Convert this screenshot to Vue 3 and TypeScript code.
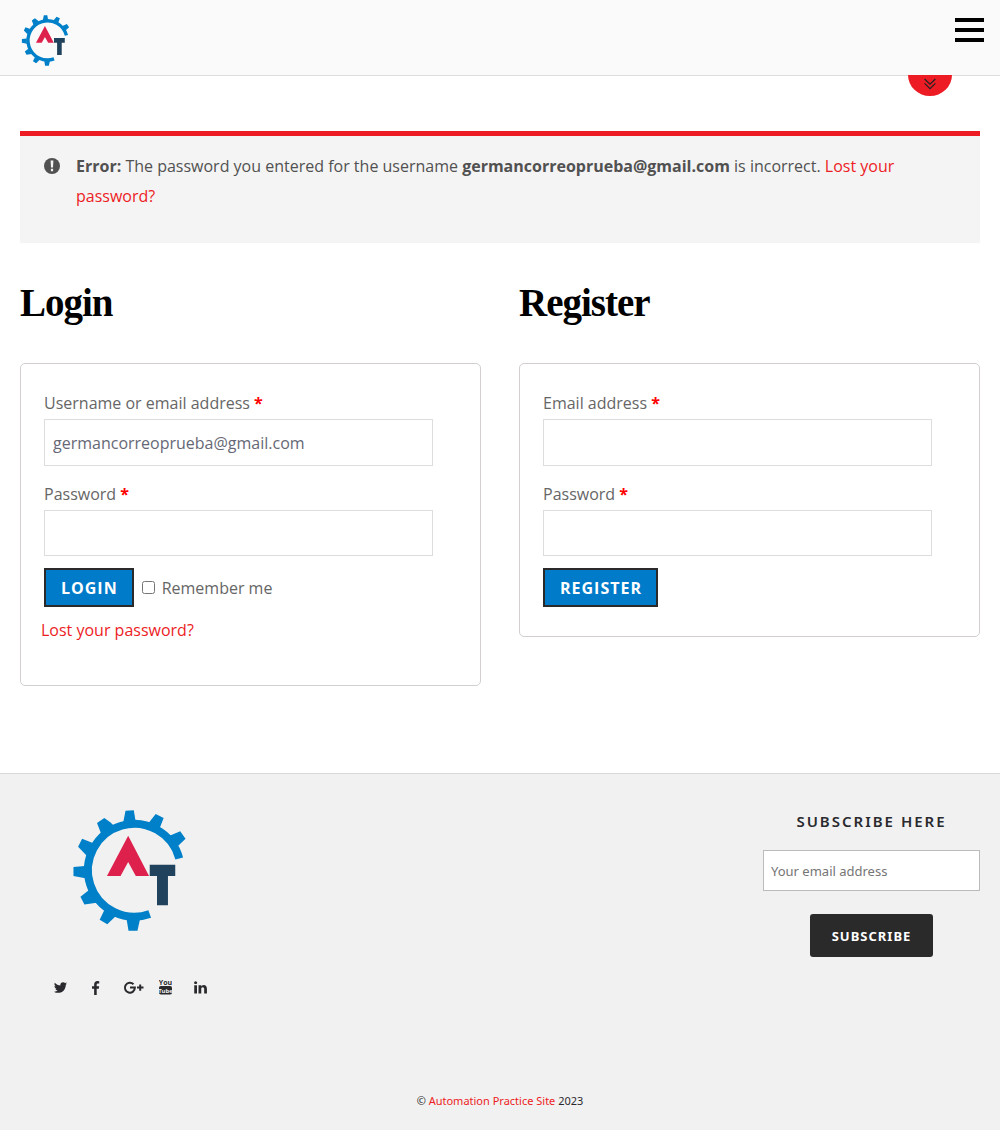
<script setup lang="ts">
import { ref } from 'vue'

const username = ref('germancorreoprueba@gmail.com')
const loginPassword = ref('')
const remember = ref(false)
const registerEmail = ref('')
const registerPassword = ref('')
const subscriber = ref('')
</script>

<template>
  <div class="page">
    <svg class="symbols" aria-hidden="true">
      <symbol id="brand" viewBox="39 44 340 365">
        <path d="M359 190A140 140 0 1 0 270 358" fill="none" stroke="#0080c8" stroke-width="24" />
        <path
          fill="#0080c8"
          d="M197 46 222 45 228 82H190ZM288 56 312 68 300 99 266 84ZM362 108 378 131 356 152 350 176 322 128 330 122ZM111 83 133 68 152 82 166 96 126 126 122 112ZM66 131 54 155 80 182 100 144ZM40 216V243L76 250 74 213ZM61 306 73 329 110 324 86 286ZM134 344 119 375 142 389 168 364ZM200 372 206 408H233L241 372Z"
        />
        <path fill="#dd214c" d="M205 122 268 243H228L205 201 182 243H141Z" />
        <path fill="#21425c" d="M270 209H347V243H325V331H292V243H270Z" />
      </symbol>
    </svg>

    <header class="topbar">
      <a href="#" class="brand" aria-label="Home"><svg class="brand-small"><use href="#brand" /></svg></a>
      <button type="button" class="menu" aria-label="Menu"><span></span><span></span><span></span></button>
      <button type="button" class="drop" aria-label="Expand">
        <svg width="12" height="12" viewBox="0 0 12 12" fill="none" stroke="#222" stroke-width="1.2">
          <path d="M.6 1 6 6.2 11.4 1M.6 5.4 6 10.6 11.4 5.4" />
        </svg>
      </button>
    </header>

    <main class="content">
      <div class="notice" role="alert">
        <svg class="notice-icon" width="16" height="16" viewBox="0 0 16 16">
          <circle cx="8" cy="8" r="8" fill="#515151" />
          <path d="M6.600 2.600H9.400L9 9.400H7ZM6.900 10.800H9.100V13.200H6.900Z" fill="#f4f4f4" />
        </svg>
        <p>
          <strong>Error:</strong> The password you entered for the username
          <strong>germancorreoprueba@gmail.com</strong> is incorrect. <a href="#">Lost your password?</a>
        </p>
      </div>

      <div class="columns">
        <section class="column">
          <h2>Login</h2>
          <form class="card" @submit.prevent>
            <label for="username">Username or email address <b>*</b></label>
            <input id="username" v-model="username" class="field" type="text" />
            <label for="password">Password <b>*</b></label>
            <input id="password" v-model="loginPassword" class="field" type="password" />
            <div class="actions">
              <button type="submit" class="button">LOGIN</button>
              <input id="remember" v-model="remember" type="checkbox" />
              <label for="remember">Remember me</label>
            </div>
            <p class="lost"><a href="#">Lost your password?</a></p>
          </form>
        </section>

        <section class="column">
          <h2>Register</h2>
          <form class="card" @submit.prevent>
            <label for="reg-email">Email address <b>*</b></label>
            <input id="reg-email" v-model="registerEmail" class="field" type="email" />
            <label for="reg-password">Password <b>*</b></label>
            <input id="reg-password" v-model="registerPassword" class="field" type="password" />
            <div class="actions">
              <button type="submit" class="button">REGISTER</button>
            </div>
          </form>
        </section>
      </div>
    </main>

    <footer class="footer">
      <div class="footer-row">
        <div class="footer-brand">
          <a href="#" class="brand" aria-label="Home"><svg class="brand-large"><use href="#brand" /></svg></a>
          <nav class="social">
            <a href="#" aria-label="Twitter">
              <svg width="15" height="15" viewBox="0 0 1792 1792">
                <path d="M1684 408q-67 98-162 167 1 14 1 42 0 130-38 259.500t-115.500 248.500-184.500 210.500-258 146-323 54.500q-271 0-496-145 35 4 78 4 225 0 401-138-105-2-188-64.500t-114-159.500q33 5 61 5 43 0 85-11-112-23-185.500-111.500t-73.500-205.500v-4q68 38 146 41-66-44-105-115t-39-154q0-88 44-163 121 149 294.500 238.500t371.500 99.500q-8-38-8-74 0-134 94.500-228.500t228.500-94.500q140 0 236 102 109-21 205-78-37 115-142 178 93-10 186-50z" />
              </svg>
            </a>
            <a href="#" aria-label="Facebook">
              <svg width="15" height="15" viewBox="0 0 1792 1792">
                <path d="M1343 140v264h-157q-86 0-116 36t-30 108v189h293l-39 296h-254v759h-306v-759h-255v-296h255v-218q0-186 104-288.500t277-102.500q147 0 228 12z" />
              </svg>
            </a>
            <a href="#" aria-label="Google Plus">
              <svg class="outline" width="26" height="15" viewBox="0 0 26 15">
                <path d="M15.500 4.200A5 5 0 1 0 16.900 7.600H12M19 7.600H25.500M22.200 4.400V10.800" />
              </svg>
            </a>
            <a href="#" aria-label="YouTube">
              <svg width="13" height="16" viewBox="0 0 13 16">
                <text x="6.500" y="6.200" text-anchor="middle" font-size="7">You</text>
                <rect x="0" y="7" width="13" height="8.500" rx="1.800" />
                <text x="6.500" y="13.800" text-anchor="middle" font-size="6" class="light">Tube</text>
              </svg>
            </a>
            <a href="#" aria-label="LinkedIn">
              <svg width="15" height="15" viewBox="0 0 1792 1792">
                <path d="M477 625v991h-330v-991h330zm21-306q1 73-50.500 122t-135.500 49h-2q-82 0-132-49t-50-122q0-74 51.500-122.500t134.500-48.500 133 48.500 51 122.500zm1166 729v568h-329v-530q0-105-40.500-164.500t-126.500-59.500q-63 0-105.500 34.500t-63.500 85.500q-11 30-11 81v553h-329q2-399 2-647t-1-296l-1-48h329v144h-2q20-32 41-56t56.500-52 87-43.500 114.500-15.500q171 0 275 113.500t104 332.500z" />
              </svg>
            </a>
          </nav>
        </div>
        <form class="subscribe" @submit.prevent>
          <h4><label for="subscriber">SUBSCRIBE HERE</label></h4>
          <input id="subscriber" v-model="subscriber" type="email" placeholder="Your email address" />
          <button type="submit">SUBSCRIBE</button>
        </form>
      </div>
      <p class="copyright">© <a href="#">Automation Practice Site</a> 2023</p>
    </footer>
  </div>
</template>

<style>
body {
  margin: 0;
  background: #fff;
}
</style>

<style scoped>
* {
  box-sizing: border-box;
}
.page {
  display: flex;
  flex-direction: column;
  min-height: 100vh;
  font: 16px/30px 'Open Sans', sans-serif;
  color: #666;
}
.symbols {
  position: absolute;
  width: 0;
  height: 0;
}
a {
  color: #ed1c24;
  text-decoration: none;
}
p {
  margin: 0;
}
.brand {
  display: block;
}
.brand svg {
  display: block;
}
.topbar {
  position: relative;
  display: flex;
  justify-content: space-between;
  align-items: flex-start;
  height: 76px;
  padding: 15px 16px 0 21px;
  background: #fafafa;
  border-bottom: 1px solid #ddd;
}
.brand-small {
  width: 49px;
  height: 51px;
}
.menu {
  display: flex;
  flex-direction: column;
  gap: 6px;
  padding: 3px 0;
  border: 0;
  background: none;
}
.menu span {
  width: 29px;
  height: 4px;
  background: #000;
}
.drop {
  position: absolute;
  top: 75px;
  right: 48px;
  width: 44px;
  height: 21px;
  padding: 0 0 3px;
  border: 0;
  border-radius: 0 0 22px 22px / 0 0 21px 21px;
  background: #ed1c24;
}
.drop svg {
  display: block;
  margin: 0 auto;
}
.content {
  flex: 1;
  padding: 55px 20px 87px;
}
.notice {
  display: flex;
  gap: 16px;
  padding: 15px 80px 32px 24px;
  border-top: 5px solid #ed1c24;
  background: #f4f4f4;
  color: #515151;
}
.notice-icon {
  flex: none;
  margin-top: 7px;
}
.columns {
  display: flex;
  align-items: flex-start;
  gap: 38px;
  margin-top: 38px;
}
.column {
  flex: 1;
}
h2 {
  margin: 0 0 38px;
  font: bold 39px/44px 'Liberation Serif', serif;
  letter-spacing: -1px;
  color: #000;
}
.card {
  padding: 24px 47px 29px 23px;
  border: 1px solid #d3ced2;
  border-radius: 5px;
}
.card > label {
  display: block;
  margin-bottom: 1px;
}
.card label b {
  color: #f00;
}
.field {
  display: block;
  width: 100%;
  height: 46px;
  margin-bottom: 14px;
  padding: 0 8px;
  border: 1px solid #ddd;
  background: #fff;
  font: 16px 'Open Sans', sans-serif;
  color: #666876;
}
.field:first-of-type {
  height: 47px;
  margin-bottom: 13px;
}
.actions {
  display: flex;
  align-items: center;
  margin-top: -2px;
}
.actions input {
  width: 13px;
  height: 13px;
  margin: 0 7px 0 8px;
}
.button {
  height: 39px;
  padding: 0 14px 0 15px;
  border: 2px solid #2a2a2a;
  background: #007bc9;
  font: bold 16px 'Open Sans', sans-serif;
  letter-spacing: 1px;
  color: #fff;
}
.lost {
  margin: 8px 0 11px -3px;
}
.footer {
  padding: 36px 20px 14px;
  border-top: 1px solid #d9d9d9;
  background: #f1f1f1;
  color: #2a2a2e;
}
.footer-row {
  display: flex;
  justify-content: space-between;
  align-items: flex-start;
}
.footer-brand {
  padding-left: 23px;
}
.brand-large {
  width: 113px;
  height: 121px;
  margin-left: 30px;
}
.social {
  display: flex;
  margin-top: 41px;
}
.social a {
  display: flex;
  align-items: center;
  justify-content: center;
  width: 35px;
  height: 30px;
}
.social svg {
  flex: none;
  fill: #2a2a2e;
}
.social .outline {
  fill: none;
  stroke: #2a2a2e;
  stroke-width: 2;
}
.social text {
  font-family: 'Liberation Sans Narrow', 'Open Sans', sans-serif;
  font-weight: bold;
}
.social .light {
  fill: #f1f1f1;
}
.subscribe {
  display: flex;
  flex-direction: column;
  align-items: center;
  width: 217px;
}
.subscribe h4 {
  margin: 0 0 18px;
  font: 600 15px/22px 'Noto Sans', sans-serif;
  letter-spacing: 2px;
}
.subscribe input {
  width: 100%;
  height: 41px;
  margin-bottom: 23px;
  padding: 0 7px;
  border: 1px solid #bbb;
  background: #fff;
  font: 13px 'Noto Sans', sans-serif;
  color: #2a2a2e;
}
.subscribe input::placeholder {
  color: #757575;
}
.subscribe button {
  width: 123px;
  height: 43px;
  padding: 0;
  border: 0;
  border-radius: 3px;
  background: #2a2a2a;
  font: bold 13px 'Noto Sans', sans-serif;
  letter-spacing: 1px;
  color: #fff;
}
.copyright {
  margin-top: 84px;
  font: 11px/30px 'Noto Sans', sans-serif;
  text-align: center;
}
</style>
